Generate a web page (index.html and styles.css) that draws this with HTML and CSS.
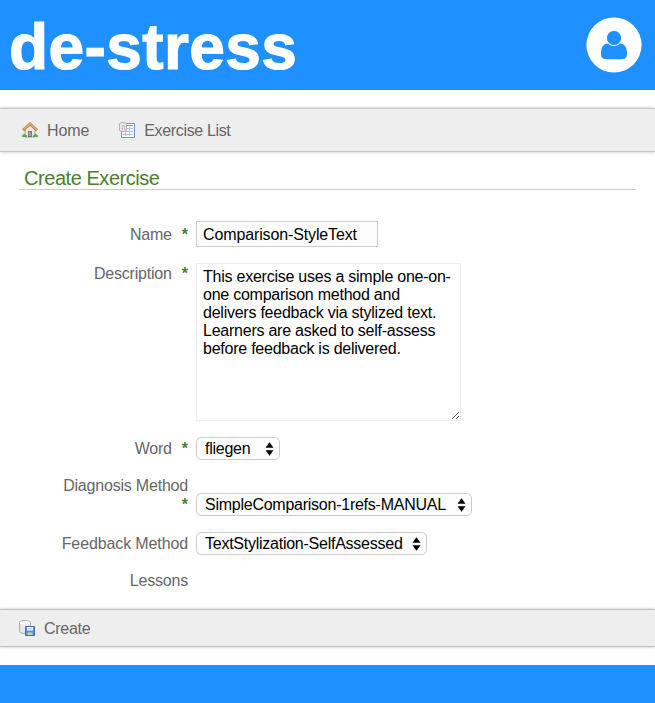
FILE: index.html
```html
<!DOCTYPE html>
<html lang="en">
<head>
<meta charset="utf-8">
<title>Create Exercise</title>
<link rel="stylesheet" href="styles.css">
</head>
<body>
<header class="banner">
  <div class="logo">de-stress</div>
  <svg class="avatar" viewBox="0 0 56 56"><circle cx="28" cy="28" r="27.6" fill="#fff"/><path d="M22 26.500c-5 .2-7 4.500-7 10 0 3.700 1.500 5.700 5 5.700h16c3.500 0 5-2 5-5.700 0-5.500-2-9.800-7-10-3.500 2.800-8.500 2.800-12 0z" fill="#1e90ff"/><circle cx="28" cy="21" r="7.600" fill="#1e90ff" stroke="#fff" stroke-width="1"/></svg>
</header>
<nav class="bar nav">
  <a class="item home"><svg class="icon" viewBox="0 0 16 16"><path d="M3 7.500 8 3l5 4.500V15H3z" fill="#eee6dc" stroke="#aaa097"/><path d="M6 9h4v6H6z" fill="#777"/><path d="M7 10h2v4H7z" fill="#aaa"/><path d="M1 8.300 8 2l7 6.300" fill="none" stroke="#b98343" stroke-width="2.800"/><path d="M1.500 7.700 8 1.800l6.500 5.900" fill="none" stroke="#e2b26b" stroke-width="1.300"/><path d="M0 15c0-2 1-3 2.500-3S5 13 5 15zM11 15c0-2 1-3 2.500-3S16 13 16 15z" fill="#55a857"/></svg><span>Home</span></a>
  <a class="item list"><svg class="icon" viewBox="0 0 16 16"><path d="M2.500 1.500h13v14h-13z" fill="#fff" stroke="#6596d8"/><path d="M8 3.500h6" stroke="#58b163"/><path d="M4 6.500h10M4 9.500h10M4 12.500h10M6.500 5v9M10.500 5v9" stroke="#a5c6f2"/><path d="M.5 2C.5-.1 7.500-.1 7.500 2v6c0 2.100-7 2.100-7 0z" fill="#e8e8e8" stroke="#b0b0b0"/><path d="M3.500 3v5M5.500 3v5" stroke="#bbb"/></svg><span>Exercise List</span></a>
</nav>
<main>
  <h1><span>Create Exercise</span></h1>
  <form>
    <div class="row name"><label><span class="t">Name</span><b>*</b></label><input type="text" value="Comparison-StyleText"></div>
    <div class="row description"><label><span class="t">Description</span><b>*</b></label><textarea spellcheck="false">This exercise uses a simple one-on-one comparison method and delivers feedback via stylized text. Learners are asked to self-assess before feedback is delivered.</textarea></div>
    <div class="row word"><label><span class="t">Word</span><b>*</b></label><div class="select"><select><option>fliegen</option></select><svg viewBox="0 0 8 14"><path d="M0 5.700 4 .200l4 5.500zM0 8.300l4 5.500 4-5.500z"/></svg></div></div>
    <div class="row diagnosis"><label><span class="t">Diagnosis Method</span><b>*</b></label><div class="select"><select><option>SimpleComparison-1refs-MANUAL</option></select><svg viewBox="0 0 8 14"><path d="M0 5.700 4 .200l4 5.500zM0 8.300l4 5.500 4-5.500z"/></svg></div></div>
    <div class="row feedback"><label><span class="t">Feedback Method</span></label><div class="select"><select><option>TextStylization-SelfAssessed</option></select><svg viewBox="0 0 8 14"><path d="M0 5.700 4 .200l4 5.500zM0 8.300l4 5.500 4-5.500z"/></svg></div></div>
    <div class="row lessons"><label><span class="t">Lessons</span></label></div>
  </form>
</main>
<div class="bar actions">
  <a class="item create"><svg class="icon" viewBox="0 0 16 16"><path d="M.5 2.700C.5-.1 11.500-.1 11.500 2.700v8.600c0 2.800-11 2.800-11 0z" fill="#e9e9e9" stroke="#aaa"/><ellipse cx="6" cy="2.800" rx="5" ry="1.700" fill="#fafafa"/><path d="M6.500 6.500h9v9h-9z" fill="#5d8edb" stroke="#3d6fc0"/><path d="M8 7h6v3.500H8z" fill="#f5f9ff"/><path d="M8.500 12.500h5V15h-5z" fill="#b5dc98"/><path d="M9 8.500h4" stroke="#a9c5ee"/></svg><span>Create</span></a>
</div>
<footer></footer>
</body>
</html>
```
FILE: styles.css
```css
* { box-sizing: border-box; }
body {
  margin: 0;
  height: 703px;
  overflow: hidden;
  background: #fff;
  color: #666;
  font: 16px/18px "Liberation Sans", Arial, sans-serif;
  letter-spacing: -0.3px;
}
.banner {
  height: 90px;
  padding: 0 13px 0 9px;
  display: flex;
  justify-content: space-between;
  align-items: center;
  background: #1e90ff;
}
.logo {
  padding-top: 3px;
  color: #fff;
  font-size: 64px;
  line-height: 90px;
  font-weight: 700;
  letter-spacing: 0.4px;
  -webkit-text-stroke: 1.2px #fff;
}
.avatar { width: 56px; height: 56px; }
.bar {
  display: flex;
  align-items: center;
  background: #eee;
  border-top: 1px solid #c3c3c3;
  border-bottom: 1px solid #c3c3c3;
  box-shadow: 0 0 3px rgba(0, 0, 0, 0.25);
}
.nav { height: 44px; margin-top: 18px; padding-left: 22px; gap: 30px; }
.item { display: flex; align-items: center; gap: 9px; }
.item span { padding-top: 2px; }
.icon { width: 16px; height: 16px; }
.home { letter-spacing: -0.1px; }
.list { letter-spacing: -0.35px; }
h1 {
  margin: 16px 19px 0;
  height: 22px;
  padding-left: 5px;
  border-bottom: 1px solid #ccc;
  color: #48802c;
  font-size: 20px;
  line-height: 20px;
  font-weight: 400;
  letter-spacing: -0.45px;
}
form { padding-top: 31px; }
.row { display: flex; align-items: flex-start; }
label { width: 188px; margin-right: 8px; padding-top: 4px; text-align: right; letter-spacing: -0.2px; }
label b { display: inline-block; margin-left: 10px; color: #48802c; font-size: 16px; letter-spacing: 0; }
input, textarea, select {
  margin: 0;
  font: inherit;
  letter-spacing: inherit;
  color: #000;
  background: #fcfcfc;
  border: 1px solid #ccc;
  outline: none;
}
input { width: 182px; height: 26px; padding: 3px 6px 1px; letter-spacing: -0.13px; }
textarea {
  display: block;
  width: 265px;
  height: 158px;
  padding: 4px 6px;
  background: #fff;
  border-color: #eee;
  line-height: 18px;
  letter-spacing: -0.24px;
  overflow: hidden;
}
.name label { padding-top: 5px; }
.description { margin-top: 16px; height: 158px; }
.description label { padding-top: 2px; }
.word { margin-top: 16px; }
.word label { padding-top: 3px; }
.select { position: relative; height: 23px; }
select { appearance: none; width: 100%; height: 23px; padding: 0 8px; border-radius: 5px; line-height: 20px; letter-spacing: -0.25px; }
.select svg { position: absolute; right: 6px; top: 5px; width: 9px; height: 14px; pointer-events: none; }
.word .select { width: 84px; }
.diagnosis { margin-top: 14px; height: 42px; align-items: flex-end; }
.diagnosis label { height: 42px; padding-top: 3px; }
.diagnosis b { display: block; padding-top: 1px; }
.diagnosis .select { width: 276px; }
.feedback { margin-top: 16px; }
.feedback .select { width: 231px; }
.feedback label { padding-top: 3px; letter-spacing: -0.12px; }
.lessons { margin-top: 13px; }
.actions { height: 38px; margin-top: 19px; padding-left: 19px; }
footer { height: 38px; margin-top: 18px; background: #1e90ff; }
```
